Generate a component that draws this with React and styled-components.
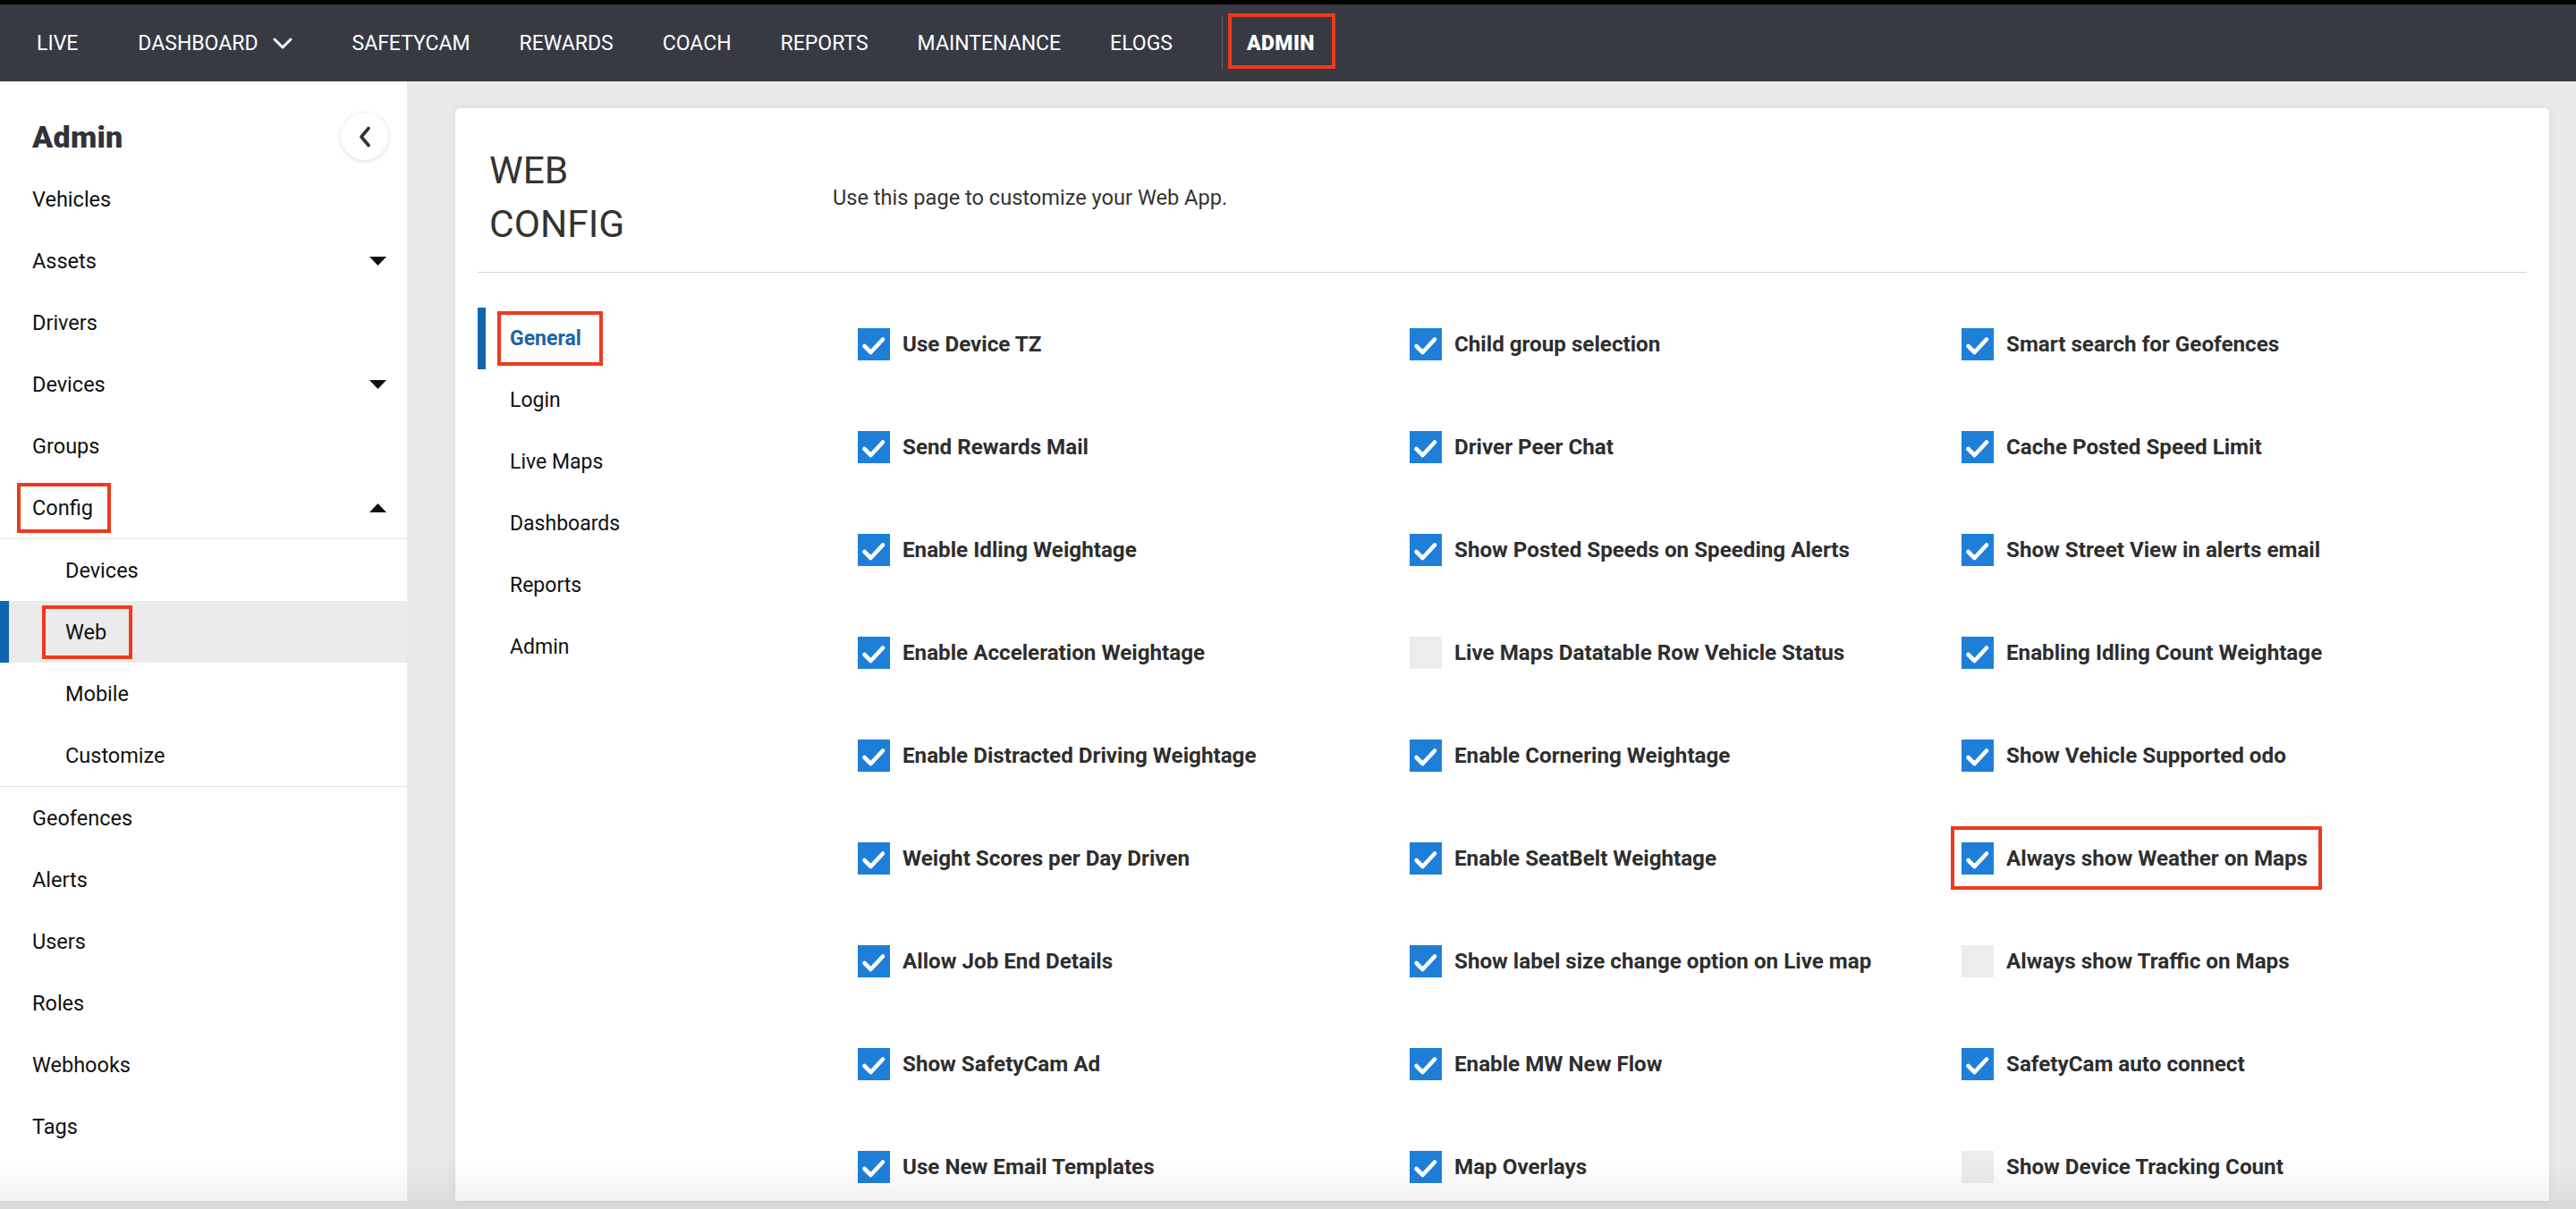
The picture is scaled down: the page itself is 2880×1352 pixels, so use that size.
import React from "react";
import styled, { createGlobalStyle } from "styled-components";

const GlobalStyle = createGlobalStyle`
  html, body { margin: 0; padding: 0; }
  body {
    font-family: Roboto, "Liberation Sans", Arial, sans-serif;
    background: #e9e9e9;
    color: #111;
  }
  * { box-sizing: border-box; }
`;

const Page = styled.div`
  width: 2880px;
  height: 1352px;
  display: flex;
  flex-direction: column;
  overflow: hidden;
  background: #e9e9e9;
`;

/* ---------- Top navigation ---------- */
const NavBar = styled.nav`
  height: 91px;
  flex-shrink: 0;
  border-top: 5px solid #000;
  background: #373a43;
  display: flex;
  align-items: center;
  gap: 55px;
  padding-left: 41px;
`;

const NavItem = styled.a`
  position: relative;
  display: flex;
  align-items: center;
  gap: 17px;
  color: #fff;
  font-size: 23px;
  font-weight: ${(p) => (p.$active ? 900 : 400)};
  text-transform: uppercase;
  text-decoration: none;
  line-height: 27px;
  margin-left: ${(p) => p.$shift || 0}px;
  padding: ${(p) => (p.$boxed ? "0 11px 0 12px" : "0")};
  letter-spacing: ${(p) => (p.$active ? "0.4px" : "0")};
`;

const NavDivider = styled.span`
  width: 1px;
  height: 58px;
  background: #5d606a;
`;

/* ---------- Annotation frame ---------- */
const Mark = styled.span`
  position: absolute;
  top: ${(p) => p.$t}px;
  bottom: ${(p) => p.$b}px;
  left: ${(p) => p.$l}px;
  right: ${(p) => p.$r}px;
  border: 4px solid #ee3a1c;
  pointer-events: none;
`;

const Anchor = styled.span`
  position: relative;
  display: inline-block;
`;

/* ---------- Layout ---------- */
const Main = styled.div`
  position: relative;
  flex: 1;
  display: flex;
  min-height: 0;
`;

const BottomFade = styled.div`
  position: absolute;
  left: 0;
  right: 0;
  bottom: 0;
  height: 46px;
  background: linear-gradient(rgba(0, 0, 0, 0), rgba(0, 0, 0, 0.05));
  pointer-events: none;
`;

const BottomStrip = styled.div`
  height: 9px;
  flex-shrink: 0;
  background: #dadada;
`;

/* ---------- Sidebar ---------- */
const Sidebar = styled.aside`
  width: 455px;
  flex-shrink: 0;
  background: #fff;
  display: flex;
  flex-direction: column;
`;

const SideHeader = styled.div`
  height: 97px;
  padding: 35px 21px 9px 36px;
  display: flex;
  align-items: center;
  justify-content: space-between;
`;

const SideTitle = styled.h2`
  margin: 0;
  font-size: 34px;
  font-weight: 900;
  color: #30333b;
  letter-spacing: 0.3px;
`;

const CollapseButton = styled.button`
  width: 53px;
  height: 53px;
  border-radius: 50%;
  border: none;
  background: #fff;
  box-shadow: 0 1px 5px rgba(0, 0, 0, 0.16);
  display: flex;
  align-items: center;
  justify-content: center;
  padding: 0;
`;

const SideItem = styled.div`
  position: relative;
  height: 69px;
  display: flex;
  align-items: center;
  justify-content: space-between;
  padding: 0 23px 0 ${(p) => (p.$sub ? 73 : 36)}px;
  font-size: 23.5px;
  line-height: 28px;
  color: #111;
  background: ${(p) => (p.$active ? "#ebebeb" : "transparent")};
  &::before {
    content: "";
    display: ${(p) => (p.$active ? "block" : "none")};
    position: absolute;
    left: 0;
    top: 0;
    bottom: 0;
    width: 10px;
    background: #1064b0;
  }
`;

const SubGroup = styled.div`
  border-top: 1px solid #e5e5e5;
  border-bottom: 1px solid #e5e5e5;
`;

/* ---------- Content card ---------- */
const ContentArea = styled.div`
  flex: 1;
  display: flex;
  padding: 30px 30px 0 54px;
  min-width: 0;
`;

const Card = styled.section`
  flex: 1;
  background: #fff;
  border-radius: 5px 5px 0 0;
  box-shadow: 0 0 8px rgba(0, 0, 0, 0.07);
  padding: 40px 25px 0;
  overflow: hidden;
`;

const CardHeader = styled.header`
  display: flex;
  align-items: center;
  padding: 0 0 23px 13px;
  border-bottom: 1px solid #d4d4d4;
`;

const Title = styled.h1`
  margin: 0;
  width: 384px;
  flex-shrink: 0;
  font-size: 42.5px;
  font-weight: 400;
  line-height: 60px;
  color: #333;
`;

const Description = styled.p`
  margin: 0;
  font-size: 23.6px;
  color: #333;
`;

const CardBody = styled.div`
  display: flex;
  padding-top: 39px;
`;

const Tabs = styled.nav`
  width: 425px;
  flex-shrink: 0;
  display: flex;
  flex-direction: column;
`;

const Tab = styled.div`
  position: relative;
  height: 69px;
  display: flex;
  align-items: center;
  padding-left: 36px;
  font-size: 23px;
  line-height: 27.6px;
  font-weight: ${(p) => (p.$active ? 700 : 400)};
  color: ${(p) => (p.$active ? "#1a63aa" : "#111")};
  &::before {
    content: "";
    display: ${(p) => (p.$active ? "block" : "none")};
    position: absolute;
    left: 0;
    top: 0;
    bottom: 0;
    width: 9px;
    background: #1064b0;
  }
`;

const Grid = styled.div`
  display: grid;
  grid-template-columns: repeat(3, 617px);
  row-gap: 79px;
  margin-top: 23px;
  align-content: start;
`;

const Option = styled.div`
  position: relative;
  justify-self: start;
  display: flex;
  align-items: center;
  gap: 14px;
  height: 36px;
  font-size: 24.2px;
  font-weight: 700;
  color: #2e2e2e;
  white-space: nowrap;
`;

const Box = styled.span`
  width: 36px;
  height: 36px;
  flex-shrink: 0;
  display: flex;
  align-items: center;
  justify-content: center;
  background: ${(p) => (p.$on ? "#1e7fd8" : "#ececec")};
`;

/* ---------- Icons ---------- */
const ChevronDown = () => (
  <svg width="22" height="13" viewBox="0 0 22 13" fill="none">
    <polyline points="2,2 11,11 20,2" stroke="#fff" strokeWidth="3" strokeLinecap="round" strokeLinejoin="round" />
  </svg>
);

const ChevronLeft = () => (
  <svg width="16" height="24" viewBox="0 0 16 24" fill="none">
    <polyline points="12,2.5 4,12 12,21.5" stroke="#333" strokeWidth="3.6" strokeLinecap="round" strokeLinejoin="round" />
  </svg>
);

const Caret = ({ up }) => (
  <svg width="19" height="10" viewBox="0 0 19 10">
    <polygon points={up ? "0,10 19,10 9.5,0" : "0,0 19,0 9.5,10"} fill="#111" />
  </svg>
);

const Check = () => (
  <svg width="36" height="36" viewBox="0 0 36 36" fill="none">
    <polyline points="7.5,20 14.5,27 28,12.5" stroke="#fff" strokeWidth="4.6" strokeLinecap="round" strokeLinejoin="round" />
  </svg>
);

/* ---------- Data ---------- */
const navItems = ["Live", "Dashboard", "SafetyCam", "Rewards", "Coach", "Reports", "Maintenance", "ELogs"];

const options = [
  ["Use Device TZ", true],
  ["Child group selection", true],
  ["Smart search for Geofences", true],
  ["Send Rewards Mail", true],
  ["Driver Peer Chat", true],
  ["Cache Posted Speed Limit", true],
  ["Enable Idling Weightage", true],
  ["Show Posted Speeds on Speeding Alerts", true],
  ["Show Street View in alerts email", true],
  ["Enable Acceleration Weightage", true],
  ["Live Maps Datatable Row Vehicle Status", false],
  ["Enabling Idling Count Weightage", true],
  ["Enable Distracted Driving Weightage", true],
  ["Enable Cornering Weightage", true],
  ["Show Vehicle Supported odo", true],
  ["Weight Scores per Day Driven", true],
  ["Enable SeatBelt Weightage", true],
  ["Always show Weather on Maps", true, true],
  ["Allow Job End Details", true],
  ["Show label size change option on Live map", true],
  ["Always show Traffic on Maps", false],
  ["Show SafetyCam Ad", true],
  ["Enable MW New Flow", true],
  ["SafetyCam auto connect", true],
  ["Use New Email Templates", true],
  ["Map Overlays", true],
  ["Show Device Tracking Count", false],
];

const tabs = ["General", "Login", "Live Maps", "Dashboards", "Reports", "Admin"];

export default function App() {
  return (
    <>
      <GlobalStyle />
      <Page>
        <NavBar>
          {navItems.map((n) => (
            <NavItem key={n} $boxed={n === "Dashboard"}>
              {n}
              {n === "Dashboard" && <ChevronDown />}
            </NavItem>
          ))}
          <NavDivider />
          <NavItem $active $shift={-28}>
            Admin
            <Mark $t={-20} $b={-15} $l={-21} $r={-23} />
          </NavItem>
        </NavBar>

        <Main>
          <Sidebar>
            <SideHeader>
              <SideTitle>Admin</SideTitle>
              <CollapseButton aria-label="Collapse">
                <ChevronLeft />
              </CollapseButton>
            </SideHeader>
            <SideItem>Vehicles</SideItem>
            <SideItem>
              Assets
              <Caret />
            </SideItem>
            <SideItem>Drivers</SideItem>
            <SideItem>
              Devices
              <Caret />
            </SideItem>
            <SideItem>Groups</SideItem>
            <SideItem>
              <Anchor>
                Config
                <Mark $t={-14} $b={-14} $l={-17} $r={-20} />
              </Anchor>
              <Caret up />
            </SideItem>
            <SubGroup>
              <SideItem $sub>Devices</SideItem>
              <SideItem $sub $active>
                <Anchor>
                  Web
                  <Mark $t={-16} $b={-16} $l={-26} $r={-29} />
                </Anchor>
              </SideItem>
              <SideItem $sub>Mobile</SideItem>
              <SideItem $sub>Customize</SideItem>
            </SubGroup>
            <SideItem>Geofences</SideItem>
            <SideItem>Alerts</SideItem>
            <SideItem>Users</SideItem>
            <SideItem>Roles</SideItem>
            <SideItem>Webhooks</SideItem>
            <SideItem>Tags</SideItem>
          </Sidebar>

          <ContentArea>
            <Card>
              <CardHeader>
                <Title>
                  WEB
                  <br />
                  CONFIG
                </Title>
                <Description>Use this page to customize your Web App.</Description>
              </CardHeader>
              <CardBody>
                <Tabs>
                  {tabs.map((t, i) => (
                    <Tab key={t} $active={i === 0}>
                      {i === 0 ? (
                        <Anchor>
                          {t}
                          <Mark $t={-17} $b={-17} $l={-14} $r={-24} />
                        </Anchor>
                      ) : (
                        t
                      )}
                    </Tab>
                  ))}
                </Tabs>
                <Grid>
                  {options.map(([label, on, marked]) => (
                    <Option key={label}>
                      <Box $on={on}>{on && <Check />}</Box>
                      {label}
                      {marked && <Mark $t={-18} $b={-17} $l={-12} $r={-16} />}
                    </Option>
                  ))}
                </Grid>
              </CardBody>
            </Card>
          </ContentArea>
          <BottomFade />
        </Main>
        <BottomStrip />
      </Page>
    </>
  );
}
